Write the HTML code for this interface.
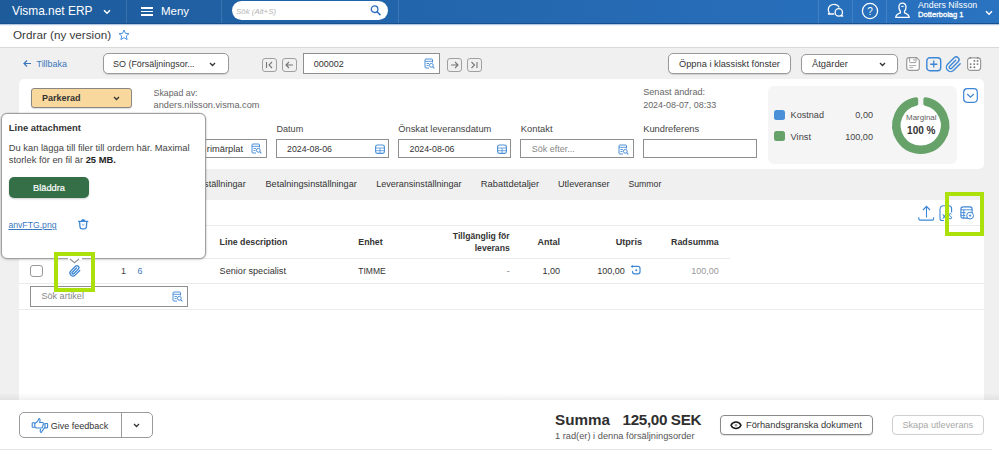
<!DOCTYPE html>
<html><head><meta charset="utf-8"><style>
html,body{margin:0;padding:0;}
body{width:999px;height:450px;overflow:hidden;position:relative;background:#f0f0f0;font-family:"Liberation Sans", sans-serif;}
.t{position:absolute;white-space:nowrap;line-height:1;}
.r{position:absolute;}
svg.r{overflow:visible;}
</style></head><body>
<div class="r" style="left:0px;top:0px;width:999px;height:24px;background:linear-gradient(90deg,#1d5b9b 0%,#2366ad 45%,#2a73c1 100%);"></div>
<div class="r" style="left:126px;top:0px;width:1px;height:24px;background:rgba(255,255,255,0.12);"></div>
<div class="r" style="left:221px;top:0px;width:1px;height:24px;background:rgba(255,255,255,0.12);"></div>
<div class="r" style="left:398px;top:0px;width:1px;height:24px;background:rgba(255,255,255,0.12);"></div>
<div class="r" style="left:818px;top:0px;width:1px;height:24px;background:rgba(255,255,255,0.12);"></div>
<div class="r" style="left:852px;top:0px;width:1px;height:24px;background:rgba(255,255,255,0.12);"></div>
<div class="r" style="left:886px;top:0px;width:1px;height:24px;background:rgba(255,255,255,0.12);"></div>
<div class="t" style="left:12px;top:6px;font-size:11.9px;color:#fff;font-weight:400;">Visma.net ERP</div>
<svg class="r" style="left:103px;top:9px" width="8" height="6" viewBox="0 0 8 6"><path d="M1 1.2 L4 4.2 L7 1.2" fill="none" stroke="#fff" stroke-width="1.5"/></svg>
<div class="r" style="left:141px;top:7px;width:12px;height:1.5999999999999996px;background:#fff;"></div>
<div class="r" style="left:141px;top:10.6px;width:12px;height:1.5999999999999996px;background:#fff;"></div>
<div class="r" style="left:141px;top:14.2px;width:12px;height:1.5999999999999996px;background:#fff;"></div>
<div class="t" style="left:161px;top:6px;font-size:11.5px;color:#fff;font-weight:400;">Meny</div>
<div class="r" style="left:232px;top:0.6px;width:156px;height:19.799999999999997px;background:#fff;border-radius:10px;"></div>
<div class="t" style="left:236px;top:8px;font-size:7.9px;color:#b5b5b5;font-weight:400;font-style:italic;">Sök (Alt+S)</div>
<svg class="r" style="left:370px;top:4px" width="12" height="12" viewBox="0 0 12 12"><circle cx="4.6" cy="5.2" r="3.3" fill="none" stroke="#2f6fc0" stroke-width="1.3"/><path d="M7.1 7.7 L10 10.6" stroke="#2f6fc0" stroke-width="1.5" stroke-linecap="round"/></svg>
<svg class="r" style="left:824px;top:1px" width="24" height="20" viewBox="0 0 24 20"><path d="M10.2 13 L4.4 13 L5.2 11.6 C4.6 10.7 4.3 9.7 4.3 8.6 C4.3 5.6 6.9 3.3 10 3.3 C12.4 3.3 14.4 4.6 15.2 6.5" fill="none" stroke="#fff" stroke-width="1.3" stroke-linejoin="round"/><circle cx="14.8" cy="11.4" r="3.7" fill="none" stroke="#fff" stroke-width="1.3"/><path d="M17.4 14 L18.8 15.2 L16.6 15" fill="none" stroke="#fff" stroke-width="1.2" stroke-linejoin="round"/></svg>
<svg class="r" style="left:861px;top:2px" width="18" height="18" viewBox="0 0 18 18"><circle cx="9" cy="9" r="7.6" fill="none" stroke="#fff" stroke-width="1.3"/><text x="9" y="12.6" text-anchor="middle" font-family="Liberation Sans" font-size="10" fill="#fff">?</text></svg>
<svg class="r" style="left:894px;top:2px" width="17" height="17" viewBox="0 0 17 17"><path d="M8.4 1.2 C6.2 1.2 4.9 2.8 4.9 5 C4.9 7 5.6 8.5 6.4 9.3 L6.4 10.9 C4.3 11.6 2 12.6 1.7 15.4 L15.2 15.4 C14.9 12.6 12.6 11.6 10.5 10.9 L10.5 9.3 C11.3 8.5 12 7 12 5 C12 2.8 10.7 1.2 8.4 1.2 Z" fill="none" stroke="#fff" stroke-width="1.3" stroke-linejoin="round"/><path d="M7.2 4.4 L9.7 4.4" stroke="#fff" stroke-width="1"/></svg>
<div class="t" style="left:918px;top:1px;font-size:8.8px;color:#fff;font-weight:400;">Anders Nilsson</div>
<div class="t" style="left:918px;top:11px;font-size:7.6px;color:#fff;font-weight:400;-webkit-text-stroke:0.3px #fff;">Dotterbolag 1</div>
<svg class="r" style="left:985px;top:10px" width="8" height="6" viewBox="0 0 8 6"><path d="M1 1.2 L4 4.2 L7 1.2" fill="none" stroke="#fff" stroke-width="1.5"/></svg>
<div class="r" style="left:0px;top:24px;width:999px;height:24px;background:#fff;border-bottom:1px solid #d9d9d9;box-sizing:border-box;"></div>
<div class="r" style="left:0px;top:23px;width:999px;height:1px;background:#174f8f;"></div>
<div class="r" style="left:0px;top:24px;width:999px;height:1px;background:#b3c8e0;"></div>
<div class="r" style="left:0px;top:25px;width:999px;height:1px;background:#f0f4f9;"></div>
<div class="t" style="left:13px;top:29px;font-size:11.7px;color:#3a3a3a;font-weight:400;">Ordrar (ny version)</div>
<svg class="r" style="left:118px;top:29px" width="12" height="12" viewBox="0 0 12 12"><path d="M6 1 L7.4 4.3 L11 4.6 L8.3 7 L9.1 10.6 L6 8.7 L2.9 10.6 L3.7 7 L1 4.6 L4.6 4.3 Z" fill="none" stroke="#4a90e2" stroke-width="1" stroke-linejoin="round"/></svg>
<svg class="r" style="left:23px;top:59px" width="9" height="9" viewBox="0 0 9 9"><path d="M8 4.5 L1 4.5 M4 1.5 L1 4.5 L4 7.5" fill="none" stroke="#3a77bb" stroke-width="1.2"/></svg>
<div class="t" style="left:36.5px;top:60px;font-size:8.95px;color:#3a77bb;font-weight:400;">Tillbaka</div>
<div class="r" style="left:103px;top:53px;width:126px;height:20.5px;background:#fff;border:1px solid #9a9a9a;border-radius:5px;box-sizing:border-box;box-shadow:0 1px 1px rgba(0,0,0,0.13);"></div>
<div class="t" style="left:113px;top:60px;font-size:8.96px;color:#333;font-weight:400;">SO (Försäljningsor...</div>
<svg class="r" style="left:209px;top:61.5px" width="7" height="5" viewBox="0 0 7 5"><path d="M1 1 L3.5 3.5 L6 1" fill="none" stroke="#333" stroke-width="1.3"/></svg>
<div class="r" style="left:262px;top:57.5px;width:14.5px;height:14.0px;border:1px solid #a0a0a0;border-radius:3px;box-sizing:border-box;"></div>
<svg class="r" style="left:262px;top:57.5px" width="15" height="14" viewBox="0 0 15 14"><path d="M4.5 4 L4.5 10 M10 4 L7 7 L10 10" fill="none" stroke="#777" stroke-width="1.1"/></svg>
<div class="r" style="left:282px;top:57.5px;width:14.5px;height:14.0px;border:1px solid #a0a0a0;border-radius:3px;box-sizing:border-box;"></div>
<svg class="r" style="left:282px;top:57.5px" width="15" height="14" viewBox="0 0 15 14"><path d="M11 7 L4 7 M7 4 L4 7 L7 10" fill="none" stroke="#777" stroke-width="1.1"/></svg>
<div class="r" style="left:447px;top:57.5px;width:14.5px;height:14.0px;border:1px solid #a0a0a0;border-radius:3px;box-sizing:border-box;"></div>
<svg class="r" style="left:447px;top:57.5px" width="15" height="14" viewBox="0 0 15 14"><path d="M4 7 L11 7 M8 4 L11 7 L8 10" fill="none" stroke="#777" stroke-width="1.1"/></svg>
<div class="r" style="left:467px;top:57.5px;width:14.5px;height:14.0px;border:1px solid #a0a0a0;border-radius:3px;box-sizing:border-box;"></div>
<svg class="r" style="left:467px;top:57.5px" width="15" height="14" viewBox="0 0 15 14"><path d="M10 4 L10 10 M4.5 4 L7.5 7 L4.5 10" fill="none" stroke="#777" stroke-width="1.1"/></svg>
<div class="r" style="left:302.5px;top:53px;width:137.5px;height:20.5px;background:#fff;border:1px solid #8f8f8f;box-sizing:border-box;"></div>
<div class="t" style="left:313.75px;top:60px;font-size:8.99px;color:#333;font-weight:400;">000002</div>
<svg class="r" style="left:424px;top:58px" width="11" height="11" viewBox="0 0 11 11"><path d="M8.5 4.5 L8.5 2 Q8.5 1 7.5 1 L2 1 Q1 1 1 2 L1 9 Q1 10 2 10 L5 10" fill="none" stroke="#4a8fd8" stroke-width="1"/><path d="M1 3.3 L8.5 3.3 M2.5 5.5 L5 5.5 M2.5 7.5 L4.5 7.5" stroke="#4a8fd8" stroke-width="0.9"/><circle cx="7.3" cy="7.3" r="1.9" fill="none" stroke="#4a8fd8" stroke-width="1"/><path d="M8.7 8.7 L10.3 10.3" stroke="#4a8fd8" stroke-width="1.1"/></svg>
<div class="r" style="left:668px;top:53px;width:123px;height:20.5px;background:#fff;border:1px solid #9a9a9a;border-radius:5px;box-sizing:border-box;box-shadow:0 1px 1px rgba(0,0,0,0.13);"></div>
<div class="t" style="left:679px;top:60px;font-size:9.27px;color:#333;font-weight:400;">Öppna i klassiskt fönster</div>
<div class="r" style="left:801px;top:53.5px;width:97px;height:20.0px;background:#fff;border:1px solid #9a9a9a;border-radius:5px;box-sizing:border-box;box-shadow:0 1px 1px rgba(0,0,0,0.13);"></div>
<div class="t" style="left:812px;top:59px;font-size:9.39px;color:#333;font-weight:400;">Åtgärder</div>
<svg class="r" style="left:879px;top:61.5px" width="7" height="5" viewBox="0 0 7 5"><path d="M1 1 L3.5 3.5 L6 1" fill="none" stroke="#333" stroke-width="1.3"/></svg>
<svg class="r" style="left:906px;top:57px" width="14" height="14" viewBox="0 0 14 14"><path d="M3 0.7 L10.6 0.7 L13.3 3.4 L13.3 10.8 Q13.3 13.3 10.8 13.3 L3.2 13.3 Q0.7 13.3 0.7 10.8 L0.7 3.2 Q0.7 0.7 3 0.7 Z" fill="#fff" stroke="#999" stroke-width="1.2"/><path d="M3.6 1 L3.6 4.8 Q3.6 5.6 4.4 5.6 L9.2 5.6 Q10 5.6 10 4.8 L10 1" fill="none" stroke="#999" stroke-width="1"/><path d="M8 2 L8 4" stroke="#999" stroke-width="1"/><path d="M3.2 8.6 L10.2 8.6 M3.2 10.6 L7.2 10.6" stroke="#aaa" stroke-width="1"/></svg>
<svg class="r" style="left:926px;top:57px" width="15.5" height="14.5" viewBox="0 0 15.5 14.5"><rect x="0.8" y="0.8" width="13.9" height="12.9" rx="3" fill="none" stroke="#3c86d6" stroke-width="1.4"/><path d="M7.75 3.5 L7.75 10.5 M4.2 7.25 L11.3 7.25" stroke="#3c86d6" stroke-width="1.3"/></svg>
<svg class="r" style="left:945px;top:56px" width="17" height="17" viewBox="0 0 24 24"><path d="M21.44 11.05l-9.19 9.19a6 6 0 0 1-8.49-8.49l9.19-9.19a4 4 0 0 1 5.66 5.66l-9.2 9.19a2 2 0 0 1-2.83-2.83l8.49-8.48" fill="none" stroke="#3c86d6" stroke-width="1.9" stroke-linecap="round" stroke-linejoin="round"/></svg>
<svg class="r" style="left:967px;top:57px" width="15" height="15" viewBox="0 0 15 15"><rect x="0.6" y="0.8" width="13" height="12.6" rx="2.8" fill="#fff" stroke="#999" stroke-width="1.2"/><path d="M3.2 0 L3.2 1.8 M10.6 0 L10.6 1.8" stroke="#888" stroke-width="1.4"/><g fill="#777"><circle cx="7.4" cy="3.9" r="0.95"/><circle cx="10.6" cy="3.9" r="0.95"/><circle cx="3.6" cy="7.1" r="0.95"/><circle cx="7.2" cy="7.1" r="0.95"/><circle cx="10.5" cy="7.1" r="0.95"/><circle cx="3.6" cy="10.3" r="0.95"/><circle cx="7.4" cy="10.3" r="0.95"/></g></svg>
<div class="r" style="left:19px;top:79px;width:965px;height:90px;background:#fff;border-radius:5px;"></div>
<div class="r" style="left:31px;top:88px;width:101px;height:20px;background:#f8d89c;border:1px solid #8a8782;border-radius:3px;box-sizing:border-box;box-shadow:0 1px 1px rgba(0,0,0,0.13);"></div>
<div class="t" style="left:42px;top:94px;font-size:9.02px;color:#333;font-weight:700;">Parkerad</div>
<svg class="r" style="left:113px;top:96px" width="7" height="5" viewBox="0 0 7 5"><path d="M1 1 L3.5 3.5 L6 1" fill="none" stroke="#333" stroke-width="1.3"/></svg>
<div class="t" style="left:153.6px;top:89px;font-size:8.79px;color:#666;font-weight:400;">Skapad av:</div>
<div class="t" style="left:153.6px;top:101px;font-size:9.21px;color:#666;font-weight:400;">anders.nilsson.visma.com</div>
<div class="t" style="left:643.2px;top:88px;font-size:9.14px;color:#666;font-weight:400;">Senast ändrad:</div>
<div class="t" style="left:643.2px;top:101px;font-size:8.93px;color:#666;font-weight:400;">2024-08-07, 08:33</div>
<div class="t" style="left:276.5px;top:125px;font-size:9.07px;color:#444;font-weight:400;">Datum</div>
<div class="t" style="left:398.3px;top:125px;font-size:9.3px;color:#444;font-weight:400;">Önskat leveransdatum</div>
<div class="t" style="left:520.8px;top:125px;font-size:9.36px;color:#444;font-weight:400;">Kontakt</div>
<div class="t" style="left:643.2px;top:125px;font-size:9.33px;color:#444;font-weight:400;">Kundreferens</div>
<div class="t" style="left:154px;top:124px;font-size:9.1px;color:#444;font-weight:400;">Huvudlager</div>
<div class="r" style="left:154px;top:138.7px;width:112.5px;height:19.600000000000023px;background:#fff;border:1px solid #8f8f8f;box-sizing:border-box;"></div>
<div class="r" style="left:276px;top:138.7px;width:113px;height:19.600000000000023px;background:#fff;border:1px solid #8f8f8f;box-sizing:border-box;"></div>
<div class="r" style="left:398px;top:138.7px;width:113px;height:19.600000000000023px;background:#fff;border:1px solid #8f8f8f;box-sizing:border-box;"></div>
<div class="r" style="left:520px;top:138.7px;width:113.5px;height:19.600000000000023px;background:#fff;border:1px solid #8f8f8f;box-sizing:border-box;"></div>
<div class="r" style="left:643px;top:138.7px;width:113.5px;height:19.600000000000023px;background:#fff;border:1px solid #8f8f8f;box-sizing:border-box;"></div>
<div class="t" style="right:756px;top:145px;font-size:9.3px;color:#333;font-weight:400;">rimärplat</div>
<div class="t" style="left:287px;top:145px;font-size:8.8px;color:#333;font-weight:400;">2024-08-06</div>
<div class="t" style="left:409.5px;top:145px;font-size:8.8px;color:#333;font-weight:400;">2024-08-06</div>
<div class="t" style="left:531.75px;top:145px;font-size:9.0px;color:#888;font-weight:400;">Sök efter...</div>
<svg class="r" style="left:251px;top:143px" width="11" height="11" viewBox="0 0 11 11"><path d="M8.5 4.5 L8.5 2 Q8.5 1 7.5 1 L2 1 Q1 1 1 2 L1 9 Q1 10 2 10 L5 10" fill="none" stroke="#4a8fd8" stroke-width="1"/><path d="M1 3.3 L8.5 3.3 M2.5 5.5 L5 5.5 M2.5 7.5 L4.5 7.5" stroke="#4a8fd8" stroke-width="0.9"/><circle cx="7.3" cy="7.3" r="1.9" fill="none" stroke="#4a8fd8" stroke-width="1"/><path d="M8.7 8.7 L10.3 10.3" stroke="#4a8fd8" stroke-width="1.1"/></svg>
<svg class="r" style="left:618px;top:144px" width="11" height="11" viewBox="0 0 11 11"><path d="M8.5 4.5 L8.5 2 Q8.5 1 7.5 1 L2 1 Q1 1 1 2 L1 9 Q1 10 2 10 L5 10" fill="none" stroke="#4a8fd8" stroke-width="1"/><path d="M1 3.3 L8.5 3.3 M2.5 5.5 L5 5.5 M2.5 7.5 L4.5 7.5" stroke="#4a8fd8" stroke-width="0.9"/><circle cx="7.3" cy="7.3" r="1.9" fill="none" stroke="#4a8fd8" stroke-width="1"/><path d="M8.7 8.7 L10.3 10.3" stroke="#4a8fd8" stroke-width="1.1"/></svg>
<svg class="r" style="left:375px;top:143.5px" width="10" height="10" viewBox="0 0 10 10"><rect x="0.6" y="1" width="8.8" height="8.4" rx="1.8" fill="none" stroke="#4a8fd8" stroke-width="1.1"/><path d="M0.6 4 L9.4 4 M5 4 L5 9.4 M0.6 6.7 L9.4 6.7" stroke="#4a8fd8" stroke-width="0.8"/></svg>
<svg class="r" style="left:496.5px;top:143.5px" width="10" height="10" viewBox="0 0 10 10"><rect x="0.6" y="1" width="8.8" height="8.4" rx="1.8" fill="none" stroke="#4a8fd8" stroke-width="1.1"/><path d="M0.6 4 L9.4 4 M5 4 L5 9.4 M0.6 6.7 L9.4 6.7" stroke="#4a8fd8" stroke-width="0.8"/></svg>
<div class="r" style="left:768px;top:86px;width:189px;height:78px;background:#f5f5f5;border-radius:6px;"></div>
<div class="r" style="left:774.4px;top:109.6px;width:10.600000000000023px;height:10.400000000000006px;background:#4a90d9;border-radius:2.5px;"></div>
<div class="r" style="left:774.4px;top:131px;width:10.600000000000023px;height:10.400000000000006px;background:#67a26a;border-radius:2.5px;"></div>
<div class="t" style="left:790.6px;top:111px;font-size:9.1px;color:#444;font-weight:400;">Kostnad</div>
<div class="t" style="left:790.6px;top:133px;font-size:9.25px;color:#444;font-weight:400;">Vinst</div>
<div class="t" style="right:126px;top:111px;font-size:9.1px;color:#444;font-weight:400;">0,00</div>
<div class="t" style="right:126px;top:133px;font-size:9.1px;color:#444;font-weight:400;">100,00</div>
<svg class="r" style="left:891px;top:96px" width="60" height="60" viewBox="0 0 60 60"><circle cx="29.75" cy="29.4" r="20.3" fill="#fff"/><path d="M34.35 3.2 A26.6 26.6 0 1 1 25.15 3.2 L25.15 7.78 A22.1 22.1 0 1 0 34.35 7.78 Z" fill="#67a26a" stroke="#67a26a" stroke-width="4" stroke-linejoin="round"/></svg>
<div class="t" style="left:921.3px;transform:translateX(-50%);top:114px;font-size:7.98px;color:#5e5e5e;font-weight:400;">Marginal</div>
<div class="t" style="left:921.3px;transform:translateX(-50%);top:126px;font-size:10px;color:#333;font-weight:700;">100 %</div>
<svg class="r" style="left:963px;top:88px" width="15" height="15" viewBox="0 0 15 15"><rect x="0.7" y="0.7" width="13.6" height="13.6" rx="3.5" fill="none" stroke="#3c86d6" stroke-width="1.2"/><path d="M4.2 6 L7.5 9.2 L10.8 6" fill="none" stroke="#3c86d6" stroke-width="1.2"/></svg>
<div class="t" style="right:753.3px;top:180px;font-size:9.14px;color:#333;font-weight:400;">Fakturainställningar</div>
<div class="t" style="left:265.5px;top:180px;font-size:9.14px;color:#333;font-weight:400;">Betalningsinställningar</div>
<div class="t" style="left:376.2px;top:180px;font-size:9.04px;color:#333;font-weight:400;">Leveransinställningar</div>
<div class="t" style="left:480.8px;top:180px;font-size:9.38px;color:#333;font-weight:400;">Rabattdetaljer</div>
<div class="t" style="left:558px;top:180px;font-size:9.12px;color:#333;font-weight:400;">Utleveranser</div>
<div class="t" style="left:628.4px;top:180px;font-size:8.73px;color:#333;font-weight:400;">Summor</div>
<div class="r" style="left:19px;top:200px;width:965px;height:200px;background:#fff;"></div>
<svg class="r" style="left:917px;top:204px" width="18" height="18" viewBox="0 0 18 18"><path d="M9.5 2.6 L9.5 13.5 M6 6 L9.5 2.4 L13 6" fill="none" stroke="#3c86d6" stroke-width="1.1"/><path d="M1.8 13.2 L1.8 14.8 Q1.8 16.1 3.1 16.1 L15.4 16.1 Q16.6 16.1 16.6 14.8 L16.6 13.2" fill="none" stroke="#3c86d6" stroke-width="1.1" stroke-linejoin="round"/></svg>
<svg class="r" style="left:939px;top:205px" width="15" height="16" viewBox="0 0 15 16"><path d="M5 15.5 L3 15.5 Q1 15.5 1 13.5 L1 4.6 Q1 0.7 4.9 0.7 L9.6 0.7 Q12.6 0.7 12.6 3.7 L12.6 7.6" fill="none" stroke="#3c86d6" stroke-width="1.1"/><path d="M3.8 9.2 L6.6 13.8 M6.6 9.2 L3.8 13.8" stroke="#3c86d6" stroke-width="1"/><path d="M8.2 8.6 L8.2 13.8" stroke="#3c86d6" stroke-width="1"/><path d="M12.6 9.4 Q12.2 8.6 11.2 8.6 Q9.8 8.8 10.1 10.3 Q10.4 11.2 11.6 11.4 Q13 11.8 12.7 13 Q12.3 14 11 13.8 Q10.2 13.6 9.9 13" fill="none" stroke="#3c86d6" stroke-width="1"/></svg>
<svg class="r" style="left:960px;top:206px" width="15" height="14" viewBox="0 0 15 14"><rect x="0.9" y="0.9" width="11.2" height="11.2" rx="2.2" fill="none" stroke="#3c86d6" stroke-width="1.1"/><path d="M0.9 3.8 L12.1 3.8 M0.9 6.7 L5.6 6.7 M0.9 9.4 L5.4 9.4 M3.8 3.8 L3.8 12.1" stroke="#3c86d6" stroke-width="0.9"/><circle cx="10.1" cy="9.6" r="3.4" fill="#fff" stroke="#3c86d6" stroke-width="1"/><path d="M10.1 8.4 L10.1 10.8 M8.9 9.6 L11.3 9.6" stroke="#3c86d6" stroke-width="0.9"/></svg>
<div class="r" style="left:19px;top:224.5px;width:965px;height:1.0px;background:#eaeaea;"></div>
<div class="t" style="left:219.6px;top:238px;font-size:8.78px;color:#333;font-weight:700;">Line description</div>
<div class="t" style="left:358.3px;top:238px;font-size:8.75px;color:#333;font-weight:700;">Enhet</div>
<div class="t" style="right:489.3px;top:232px;font-size:8.65px;color:#333;font-weight:700;">Tillgänglig för</div>
<div class="t" style="right:489.3px;top:244px;font-size:8.65px;color:#333;font-weight:700;">leverans</div>
<div class="t" style="right:439px;top:238px;font-size:8.96px;color:#333;font-weight:700;">Antal</div>
<div class="t" style="right:357px;top:238px;font-size:9.1px;color:#333;font-weight:700;">Utpris</div>
<div class="t" style="right:280.29999999999995px;top:238px;font-size:8.85px;color:#333;font-weight:700;">Radsumma</div>
<div class="r" style="left:19px;top:257.5px;width:711px;height:1.0px;background:#eaeaea;"></div>
<div class="r" style="left:30px;top:265px;width:12.5px;height:12px;border:1px solid #999;border-radius:3px;box-sizing:border-box;"></div>
<svg class="r" style="left:68.6px;top:265px" width="12" height="12" viewBox="0 0 24 24"><path d="M21.44 11.05l-9.19 9.19a6 6 0 0 1-8.49-8.49l9.19-9.19a4 4 0 0 1 5.66 5.66l-9.2 9.19a2 2 0 0 1-2.83-2.83l8.49-8.48" fill="none" stroke="#3c86d6" stroke-width="2.6" stroke-linecap="round" stroke-linejoin="round"/></svg>
<div class="t" style="left:121px;top:267px;font-size:9px;color:#444;font-weight:400;">1</div>
<div class="t" style="left:137.5px;top:267px;font-size:9px;color:#3c78c0;font-weight:400;">6</div>
<div class="t" style="left:219.6px;top:267px;font-size:9.12px;color:#333;font-weight:400;">Senior specialist</div>
<div class="t" style="left:358.3px;top:267px;font-size:8.5px;color:#333;font-weight:400;">TIMME</div>
<div class="t" style="right:489.3px;top:267px;font-size:9px;color:#777;font-weight:400;">-</div>
<div class="t" style="right:439px;top:267px;font-size:9px;color:#333;font-weight:400;">1,00</div>
<div class="t" style="right:374.29999999999995px;top:267px;font-size:9px;color:#333;font-weight:400;">100,00</div>
<svg class="r" style="left:630px;top:264px" width="12" height="11" viewBox="0 0 12 11"><path d="M2 2.4 L8 2.4 Q10 2.4 10 4.4 L10 7.8 Q10 9.8 8 9.8 L4.5 9.8 Q2.5 9.8 2.5 7.8 L2.5 7.4" fill="none" stroke="#3c86d6" stroke-width="1.2" stroke-linecap="round"/><path d="M0.6 2.4 L2.8 0.9 L2.8 3.9 Z" fill="#3c86d6"/><circle cx="6.3" cy="6.3" r="1" fill="#3c86d6"/></svg>
<div class="t" style="right:280.29999999999995px;top:267px;font-size:9px;color:#999;font-weight:400;">100,00</div>
<div class="r" style="left:19px;top:282.5px;width:965px;height:1.0px;background:#eaeaea;"></div>
<div class="r" style="left:30px;top:286px;width:158px;height:20.5px;background:#fff;border:1px solid #8f8f8f;box-sizing:border-box;"></div>
<div class="t" style="left:41.4px;top:292px;font-size:9.12px;color:#888;font-weight:400;">Sök artikel</div>
<svg class="r" style="left:172px;top:291px" width="11" height="11" viewBox="0 0 11 11"><path d="M8.5 4.5 L8.5 2 Q8.5 1 7.5 1 L2 1 Q1 1 1 2 L1 9 Q1 10 2 10 L5 10" fill="none" stroke="#4a8fd8" stroke-width="1"/><path d="M1 3.3 L8.5 3.3 M2.5 5.5 L5 5.5 M2.5 7.5 L4.5 7.5" stroke="#4a8fd8" stroke-width="0.9"/><circle cx="7.3" cy="7.3" r="1.9" fill="none" stroke="#4a8fd8" stroke-width="1"/><path d="M8.7 8.7 L10.3 10.3" stroke="#4a8fd8" stroke-width="1.1"/></svg>
<div class="r" style="left:19px;top:308.8px;width:965px;height:1.0px;background:#ececec;"></div>
<div class="r" style="left:0px;top:393px;width:999px;height:7px;background:linear-gradient(180deg,rgba(0,0,0,0) 0%,rgba(0,0,0,0.06) 100%);"></div>
<div class="r" style="left:0px;top:400px;width:999px;height:50px;background:#fff;"></div>
<div class="r" style="left:0px;top:449px;width:992px;height:1px;background:#e6e6e6;"></div>
<div class="r" style="left:19px;top:412px;width:134px;height:26px;background:#fff;border:1px solid #9a9a9a;border-radius:5px;box-sizing:border-box;"></div>
<div class="r" style="left:120.5px;top:412px;width:1.0px;height:26px;background:#9a9a9a;"></div>
<svg class="r" style="left:31px;top:417px" width="18" height="17" viewBox="0 0 18 17"><rect x="1.2" y="5.8" width="2.6" height="4.4" rx="0.6" fill="none" stroke="#3c86d6" stroke-width="1.1"/><path d="M3.8 6.5 L6.5 4.5 L8 1.5 Q9.3 1.5 9 4 L8.6 5.5 L11.6 5.5 Q12.6 5.8 12.3 7 L11.6 10 Q11.2 11 10 11 L5.5 11 L3.8 10" fill="none" stroke="#3c86d6" stroke-width="1.1" stroke-linejoin="round"/><rect x="14" y="6.5" width="2.6" height="4.4" rx="0.6" fill="none" stroke="#3c86d6" stroke-width="1.1"/><path d="M14 7 L12.6 7 M14 10.4 L12.5 12 L10.3 15.5 Q9 15.5 9.3 13.5 L9.5 12" fill="none" stroke="#3c86d6" stroke-width="1.1" stroke-linejoin="round"/></svg>
<div class="t" style="left:50.7px;top:422px;font-size:9.01px;color:#333;font-weight:400;">Give feedback</div>
<svg class="r" style="left:133px;top:423px" width="7" height="5" viewBox="0 0 7 5"><path d="M1 1 L3.5 3.5 L6 1" fill="none" stroke="#333" stroke-width="1.3"/></svg>
<div class="t" style="left:555px;top:412px;font-size:15.23px;color:#2f2f2f;font-weight:700;">Summa</div>
<div class="t" style="left:622.6px;top:412px;font-size:15.23px;color:#2f2f2f;font-weight:700;letter-spacing:-0.36px;">125,00 SEK</div>
<div class="t" style="left:555px;top:432px;font-size:9.27px;color:#555;font-weight:400;">1 rad(er) i denna försäljningsorder</div>
<div class="r" style="left:720px;top:415px;width:153px;height:20px;background:#fff;border:1px solid #8a8a8a;border-radius:4px;box-sizing:border-box;box-shadow:0 1px 1px rgba(0,0,0,0.12);"></div>
<svg class="r" style="left:730px;top:421px" width="12" height="9" viewBox="0 0 12 9"><path d="M1 4.3 Q2.5 1 6 1 Q9.5 1 11 4.3 Q9.5 7.6 6 7.6 Q2.5 7.6 1 4.3 Z" fill="#fff" stroke="#1a1a1a" stroke-width="1.5"/><circle cx="6" cy="4.3" r="1.3" fill="#999"/></svg>
<div class="t" style="left:746px;top:421px;font-size:9.31px;color:#333;font-weight:400;">Förhandsgranska dokument</div>
<div class="r" style="left:892px;top:415px;width:92px;height:20px;background:#fff;border:1px solid #cfcfcf;border-radius:4px;box-sizing:border-box;"></div>
<div class="t" style="left:902.4px;top:421px;font-size:9.16px;color:#a8a8a8;font-weight:400;">Skapa utleverans</div>
<div class="r" style="left:1px;top:113px;width:205px;height:146px;background:#fff;border:1px solid #a0a0a0;border-radius:6px;box-sizing:border-box;box-shadow:0 0 0 0.5px rgba(0,0,0,0.12),0 1px 3px rgba(0,0,0,0.12);"></div>
<div class="t" style="left:8.8px;top:123px;font-size:9.42px;color:#333;font-weight:700;">Line attachment</div>
<div class="t" style="left:8.8px;top:144px;font-size:9.36px;color:#444;font-weight:400;">Du kan lägga till filer till ordern här. Maximal</div>
<div class="t" style="left:8.8px;top:156px;font-size:9.36px;color:#444;font-weight:400;">storlek för en fil är <b style="color:#222">25 MB.</b></div>
<div class="r" style="left:9px;top:177px;width:80px;height:21px;background:#346f48;border-radius:5px;box-shadow:0 1px 2px rgba(0,0,0,0.2);"></div>
<div class="t" style="left:49px;transform:translateX(-50%);top:184px;font-size:9.28px;color:#fff;font-weight:400;-webkit-text-stroke:0.2px #fff;">Bläddra</div>
<div class="t" style="left:8.4px;top:221px;font-size:8.69px;color:#3b78c0;font-weight:400;text-decoration:underline;">anvFTG.png</div>
<svg class="r" style="left:78px;top:218px" width="11" height="12" viewBox="0 0 11 12"><path d="M0.6 3.4 L9.8 3.4" stroke="#3c86d6" stroke-width="1.3" stroke-linecap="round"/><path d="M3.3 3.1 Q3.5 1.4 5.2 1.4 Q6.9 1.4 7.1 3.1" fill="#3c86d6" stroke="#3c86d6" stroke-width="0.8"/><path d="M1.6 4 L2 8.8 Q2.2 10.9 4.1 10.9 L6.3 10.9 Q8.2 10.9 8.4 8.8 L8.8 4" fill="none" stroke="#3c86d6" stroke-width="1.3"/><path d="M4 5.6 L5.2 7.8 L6.4 5.6" fill="none" stroke="#8cb8e8" stroke-width="0.8"/></svg>
<div class="r" style="left:67.5px;top:257.5px;width:14.5px;height:2.5px;background:#fff;"></div>
<svg class="r" style="left:69px;top:258px" width="11" height="6" viewBox="0 0 11 6"><path d="M1 0.8 L5.5 4.8 L10 0.8" fill="none" stroke="#8a8a8a" stroke-width="1.1"/></svg>
<div class="r" style="left:54px;top:252px;width:41px;height:40px;border:4px solid #ace00a;box-sizing:border-box;"></div>
<div class="r" style="left:945px;top:192px;width:39px;height:44px;border:4px solid #ace00a;box-sizing:border-box;"></div>
</body></html>
